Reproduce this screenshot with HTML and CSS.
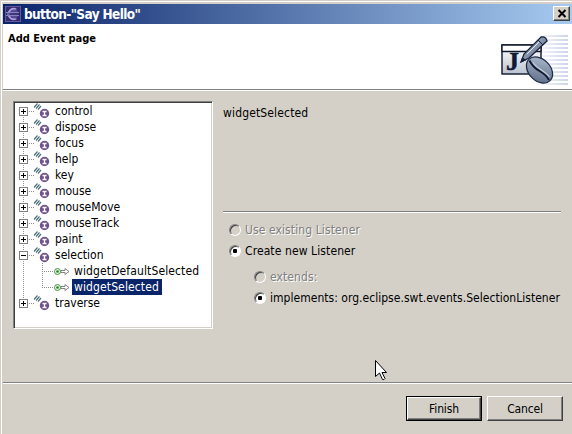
FILE: index.html
```
<!DOCTYPE html>
<html lang="en">
<head>
<meta charset="utf-8">
<title>button-"Say Hello"</title>
<link rel="stylesheet" href="styles.css">
</head>
<body>
<svg width="0" height="0" class="defs">
  <symbol id="iface" viewBox="0 0 16 16">
    <path d="M0 4.5 3.500 .5M2 5.500 5.500 1.500M4 6.500 7 3" stroke="#4b7479" stroke-width="1.200"/>
    <circle cx="10.500" cy="10.500" r="4.700" fill="#70528a"/>
    <path d="M8.500 8.500h4M8.500 12.500h4M10.500 8.500v4" stroke="#fff" stroke-width="1.300"/>
  </symbol>
  <symbol id="method" viewBox="0 0 16 16">
    <circle cx="3.500" cy="8.500" r="3" fill="#e8f6e0" stroke="#469a46"/>
    <circle cx="3.500" cy="8.500" r="1.300" fill="#248024"/>
    <path d="M7 7.500h4v-2l4 3-4 3v-2H7z" fill="#fff" stroke="#777" stroke-width=".9"/>
  </symbol>
</svg>
<div class="window">
  <header class="titlebar">
    <svg class="logo" width="16" height="16" viewBox="0 0 16 16"><rect width="16" height="16" fill="#342b70"/><rect x=".5" y=".5" width="15" height="15" fill="none" stroke="#65569d"/><path d="M12 3A6 6 0 1 0 12 13A5.500 5.500 0 0 1 12 3" fill="#a9a5dc"/><circle cx="9" cy="8" r="4.500" fill="#564892"/><path d="M1 6.500h13M1 9.500h13" stroke="#8582c0"/><path d="M3 8h12" stroke="#282261"/></svg>
    <h1>button-"Say Hello"</h1>
    <button class="close" aria-label="Close"><svg width="10" height="9" viewBox="0 0 10 9"><path d="M1.500 1 8.500 8M8.500 1 1.500 8" stroke="#000" stroke-width="2"/></svg></button>
  </header>
  <div class="banner">
    <h2>Add Event page</h2>
    <svg class="art" width="72" height="56" viewBox="0 0 72 56">
      <defs><linearGradient id="fade" gradientUnits="userSpaceOnUse" x1="34" x2="68"><stop stop-color="#fff"/><stop offset="1" stop-color="#cbd5e7"/></linearGradient><linearGradient id="steel" x2="1" y2="1"><stop stop-color="#b4bfd2"/><stop offset="1" stop-color="#53657f"/></linearGradient><linearGradient id="page" x2="0" y2="1"><stop stop-color="#fff"/><stop offset="1" stop-color="#bcc4d0"/></linearGradient></defs>
      <path d="M34 5h34v2H34zm0 4h34v2H34zm0 4h34v2H34zm0 4h34v2H34zm0 4h34v2H34zm0 4h34v2H34zm0 4h34v2H34zm0 4h34v2H34zm0 4h34v2H34zm0 4h34v2H34zm0 4h34v2H34zm0 4h34v2H34zm0 4h34v2H34z" fill="url(#fade)"/>
      <rect x="2" y="15" width="39" height="29" fill="url(#page)" stroke="#10182e" stroke-width="1.400"/><path d="M2 15h39v6.500H2z" fill="#fff" stroke="#10182e" stroke-width="1.400"/>
      <text x="6" y="40" class="letter">J</text>
      <path d="m21 32 3-8L41 7q5-1 6 4L29 28z" fill="url(#steel)" stroke="#17213d" stroke-width="1.300"/><path d="m21 32 1.500-4 3 2zM38 10l5 5" fill="#17213d" stroke="#17213d"/><path d="M27 24 39 12" stroke="#e3e9f2"/>
      <ellipse cx="39.500" cy="40" rx="15" ry="10.800" transform="rotate(45 39.500 40)" fill="url(#steel)" stroke="#202d46" stroke-width="1.300"/>
      <path d="M29.500 30.500q3 6.500 10 10.500t9.500 9" stroke="#10182e" stroke-width="1.800" fill="none"/><path d="M33 32.500q3 4 8.500 7.500t8 7" stroke="#c4cddc" stroke-width="1.200" fill="none"/>
    </svg>
  </div>
  <main>
    <ul class="tree">
      <li><i class="exp plus"></i><svg><use href="#iface"/></svg><span>control</span></li>
      <li><i class="exp plus"></i><svg><use href="#iface"/></svg><span>dispose</span></li>
      <li><i class="exp plus"></i><svg><use href="#iface"/></svg><span>focus</span></li>
      <li><i class="exp plus"></i><svg><use href="#iface"/></svg><span>help</span></li>
      <li><i class="exp plus"></i><svg><use href="#iface"/></svg><span>key</span></li>
      <li><i class="exp plus"></i><svg><use href="#iface"/></svg><span>mouse</span></li>
      <li><i class="exp plus"></i><svg><use href="#iface"/></svg><span>mouseMove</span></li>
      <li><i class="exp plus"></i><svg><use href="#iface"/></svg><span>mouseTrack</span></li>
      <li><i class="exp plus"></i><svg><use href="#iface"/></svg><span>paint</span></li>
      <li><i class="exp"></i><svg><use href="#iface"/></svg><span>selection</span></li>
      <li class="child"><svg><use href="#method"/></svg><span>widgetDefaultSelected</span></li>
      <li class="child last"><svg><use href="#method"/></svg><span class="selected">widgetSelected</span></li>
      <li class="end"><i class="exp plus"></i><svg><use href="#iface"/></svg><span>traverse</span></li>
    </ul>
    <section class="details">
      <p class="name">widgetSelected</p>
      <div class="options">
        <label class="off"><i class="radio"></i><span>Use existing Listener</span></label>
        <label><i class="radio on"></i><span>Create new Listener</span></label>
        <div class="nested">
          <label class="off"><i class="radio"></i><span>extends:</span></label>
          <label><i class="radio on"></i><span class="impl">implements: org.eclipse.swt.events.SelectionListener</span></label>
        </div>
      </div>
    </section>
  </main>
  <footer>
    <div class="default"><button>Finish</button></div>
    <button class="cancel">Cancel</button>
  </footer>
</div>
<svg class="cursor" width="12" height="21" viewBox="0 0 12 21"><path d="M.5.5v16l4-3.500 3 6.500q1.500.8 2.500-1L7 12.500h4.500z" fill="#fff" stroke="#000"/></svg>
</body>
</html>
```
FILE: styles.css
```
* { box-sizing: border-box; }
body { margin: 0; width: 572px; height: 434px; overflow: hidden; background: #d4d0c8; color: #000; font: 12px/16px "DejaVu Sans Condensed", "DejaVu Sans", sans-serif; font-stretch: condensed; }
h1, h2, p, ul { margin: 0; padding: 0; }
button { font: inherit; color: inherit; padding: 0; border-radius: 0; }
.defs { position: absolute; }
.window { width: 572px; height: 434px; display: flex; flex-direction: column; padding: 2px 0 0 1px; border-top: 1px solid #d4d0c8; border-left: 1px solid #d4d0c8; box-shadow: inset 1px 1px #fff; }
.window > * { margin-left: 1px; }
.titlebar { height: 20px; margin-top: 1px; display: flex; align-items: center; padding: 0 2px; background: linear-gradient(90deg, #0a246a, #a6caf0); }
.logo { flex: none; }
h1 { flex: 1; margin-left: 3px; color: #fff; font: bold 13.5px/18px "DejaVu Sans Condensed", "DejaVu Sans", sans-serif; font-stretch: condensed; letter-spacing: -.62px; }
.close { width: 17px; height: 15px; margin-bottom: 2px; display: grid; place-items: center; background: #d4d0c8; border: 1px solid; border-color: #fff #404040 #404040 #fff; box-shadow: inset -1px -1px #808080; }
.banner { height: 67px; display: flex; justify-content: space-between; background: #fff; border-bottom: 1px solid #fff; box-shadow: inset 0 -1px #808080; padding: 6px 0 0 5px; }
h2 { font-size: 11px; line-height: 16px; letter-spacing: 0; padding-top: 1px; }
.letter { font: bold 26px "Liberation Serif", serif; fill: #101a38; stroke: #101a38; stroke-width: .5px; }
main { height: 291px; display: flex; padding: 10px 10px 0; }
.tree { width: 200px; height: 228px; list-style: none; background: #fff; border: 1px solid; border-color: #808080 #fff #fff #808080; box-shadow: inset 1px 1px #404040, inset -1px -1px #d4d0c8; padding: 1px; }
.tree li { height: 16px; display: flex; align-items: center; padding-left: 4px; background: repeating-linear-gradient(180deg, #909090 0 1px, transparent 1px 2px) 8px 0 / 1px 100% no-repeat; }
.tree li:first-child { background-size: 1px 8px; background-position: 8px 8px; }
.tree li.end { background-size: 1px 8px; }
.tree svg { width: 16px; height: 16px; flex: none; }
.tree span { margin-left: 3px; padding: 0 2px; height: 16px; line-height: 16px; white-space: nowrap; letter-spacing: 0; }
.exp { width: 9px; height: 9px; border: 1px solid #808080; background: linear-gradient(#000, #000) center / 5px 1px no-repeat #fff; margin-right: 6px; position: relative; }
.plus { background: linear-gradient(#000, #000) center / 5px 1px no-repeat, linear-gradient(#000, #000) center / 1px 5px no-repeat, #fff; }
.exp::after { content: ""; position: absolute; left: 9px; top: 3px; width: 5px; height: 1px; background: repeating-linear-gradient(90deg, #909090 0 1px, transparent 1px 2px); }
.tree .child { padding-left: 23px; }
.tree .child::before { content: ""; width: 11px; height: 16px; margin-left: 4px; flex: none; background: repeating-linear-gradient(180deg, #909090 0 1px, transparent 1px 2px) 0 0 / 1px 100% no-repeat, repeating-linear-gradient(90deg, #909090 0 1px, transparent 1px 2px) 0 8px / 100% 1px no-repeat; }
.tree .child.last::before { background-size: 1px 8px, 100% 1px; }
.tree .child svg { margin-left: 1px; }
.tree .child span { margin-left: 2px; letter-spacing: .12px; }
.tree .selected { color: #fff; background: #0a246a; width: 90px; }
.details { width: 338px; margin-left: 10px; }
.name { height: 110px; padding-top: 4px; letter-spacing: .15px; }
.options { border-top: 1px solid #808080; box-shadow: inset 0 1px #fff; padding: 10px 0 0 6px; }
label { height: 16px; display: flex; align-items: center; white-space: nowrap; letter-spacing: .1px; margin-bottom: 5px; }
label span { margin-left: 4px; }
.impl { letter-spacing: .03px; }
.nested { padding: 5px 0 0 25px; }
.off { color: #808080; text-shadow: 1px 1px #fff; }
.radio { width: 12px; height: 12px; border-radius: 50%; border: 1px solid; border-color: #808080 #fff #fff #808080; box-shadow: inset 1px 1px #404040; flex: none; }
.on { background: radial-gradient(circle, #000 0 2px, #fff 2.5px); }
footer { flex: 1; display: flex; align-items: flex-start; gap: 5px; padding: 13px 0 0 403px; border-top: 1px solid #808080; box-shadow: inset 0 1px #fff; }
footer button { width: 76px; height: 25px; background: #d4d0c8; border: 1px solid; border-color: #fff #404040 #404040 #fff; box-shadow: inset -1px -1px #808080; letter-spacing: -.15px; }
.default { width: 76px; height: 25px; border: 1px solid #000; display: flex; }
.default button { width: 74px; height: 23px; }
.cursor { position: absolute; left: 375px; top: 360px; }
```
